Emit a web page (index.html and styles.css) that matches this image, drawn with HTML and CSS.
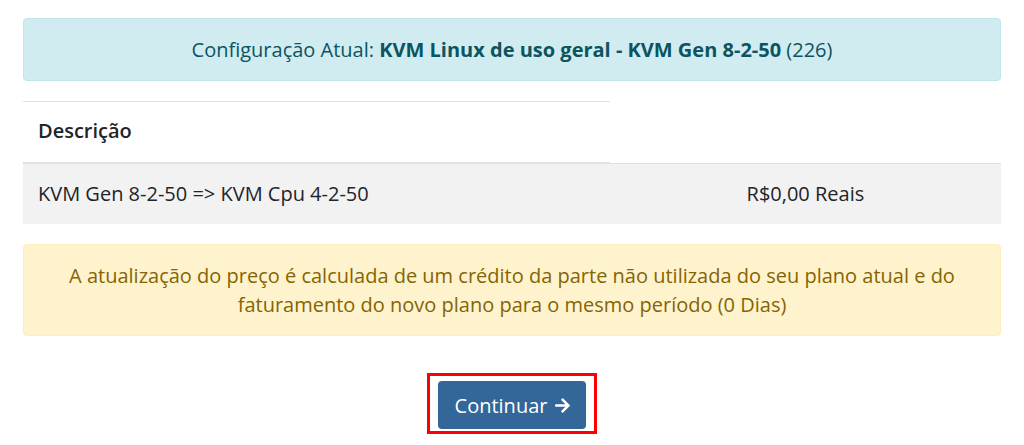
FILE: index.html
```html
<!DOCTYPE html>
<html lang="pt-BR">
<head>
<meta charset="utf-8">
<title>Upgrade</title>
<link rel="stylesheet" href="styles.css">
</head>
<body>
<div class="page">
  <div class="alert alert-info">Configuração Atual: <strong>KVM Linux de uso geral - KVM Gen 8-2-50</strong> (226)</div>

  <table class="table">
    <thead>
      <tr><th class="col-desc">Descrição</th></tr>
    </thead>
    <tbody>
      <tr class="row-striped">
        <td class="col-desc">KVM Gen 8-2-50 =&gt; KVM Cpu 4-2-50</td>
        <td class="col-price">R$0,00 Reais</td>
      </tr>
    </tbody>
  </table>

  <div class="alert alert-warning">A atualização do preço é calculada de um crédito da parte não utilizada do seu plano atual e do faturamento do novo plano para o mesmo período (0 Dias)</div>

  <div class="actions">
    <div class="highlight">
      <button class="btn" type="button">Continuar <svg class="arrow" viewBox="0 0 448 512" aria-hidden="true"><path d="M190.5 66.9l22.2-22.2c9.4-9.4 24.6-9.4 33.9 0L441 239c9.4 9.4 9.4 24.6 0 33.9L246.6 467.3c-9.4 9.4-24.6 9.4-33.9 0l-22.2-22.2c-9.5-9.5-9.3-25 .4-34.3L311.4 296H24c-13.3 0-24-10.7-24-24v-32c0-13.3 10.7-24 24-24h287.4L190.9 101.2c-9.8-9.3-10-24.8-.4-34.3z"/></svg></button>
    </div>
  </div>
</div>
</body>
</html>
```

FILE: styles.css
```css
* { box-sizing: border-box; }
html, body { margin: 0; padding: 0; background: #fff; }
body {
  font-family: "Open Sans", "Noto Sans", sans-serif;
  font-size: 20px;
  line-height: 29px;
  color: #212529;
}
.page {
  padding: 18px 23px 0 23px;
}
.alert {
  border: 1px solid transparent;
  border-radius: 4px;
  padding: 16px 25px;
  text-align: center;
}
.alert strong { font-weight: 700; }
.alert-info {
  background: #d1ecf1;
  border-color: #bee5eb;
  color: #0c5460;
}
.alert-warning {
  background: #fff3cd;
  border-color: #ffeeba;
  color: #856404;
  margin-top: 20px;
}
.table {
  width: 100%;
  margin-top: 20px;
  border-collapse: collapse;
}
.table th, .table td {
  text-align: left;
}
.table th {
  padding: 14px 15px 17px 15px;
  border-top: 1px solid #dee2e6;
  border-bottom: 2px solid #dee2e6;
  font-weight: 600;
  color: #212529;
}
.table td {
  border-top: 1px solid #dee2e6;
  padding: 15px 15px 16px 15px;
}
.col-desc { width: 60%; }
.table .col-price { text-align: center; }
.row-striped { background: #f2f2f2; }
.actions {
  display: flex;
  justify-content: center;
  margin-top: 37px;
}
.highlight {
  border: 3px solid #ff0000;
  padding: 5px 8px 2px 8px;
}
.btn {
  display: flex;
  align-items: center;
  gap: 8px;
  height: 48px;
  width: 148px;
  justify-content: center;
  padding: 0 0 0 1px;
  border: none;
  border-radius: 4px;
  background: #336699;
  color: #fff;
  font-family: "Open Sans", "Noto Sans", sans-serif;
  font-size: 20px;
  line-height: 29px;
}
.arrow {
  width: 15px;
  height: 17px;
  fill: #fff;
}
```
